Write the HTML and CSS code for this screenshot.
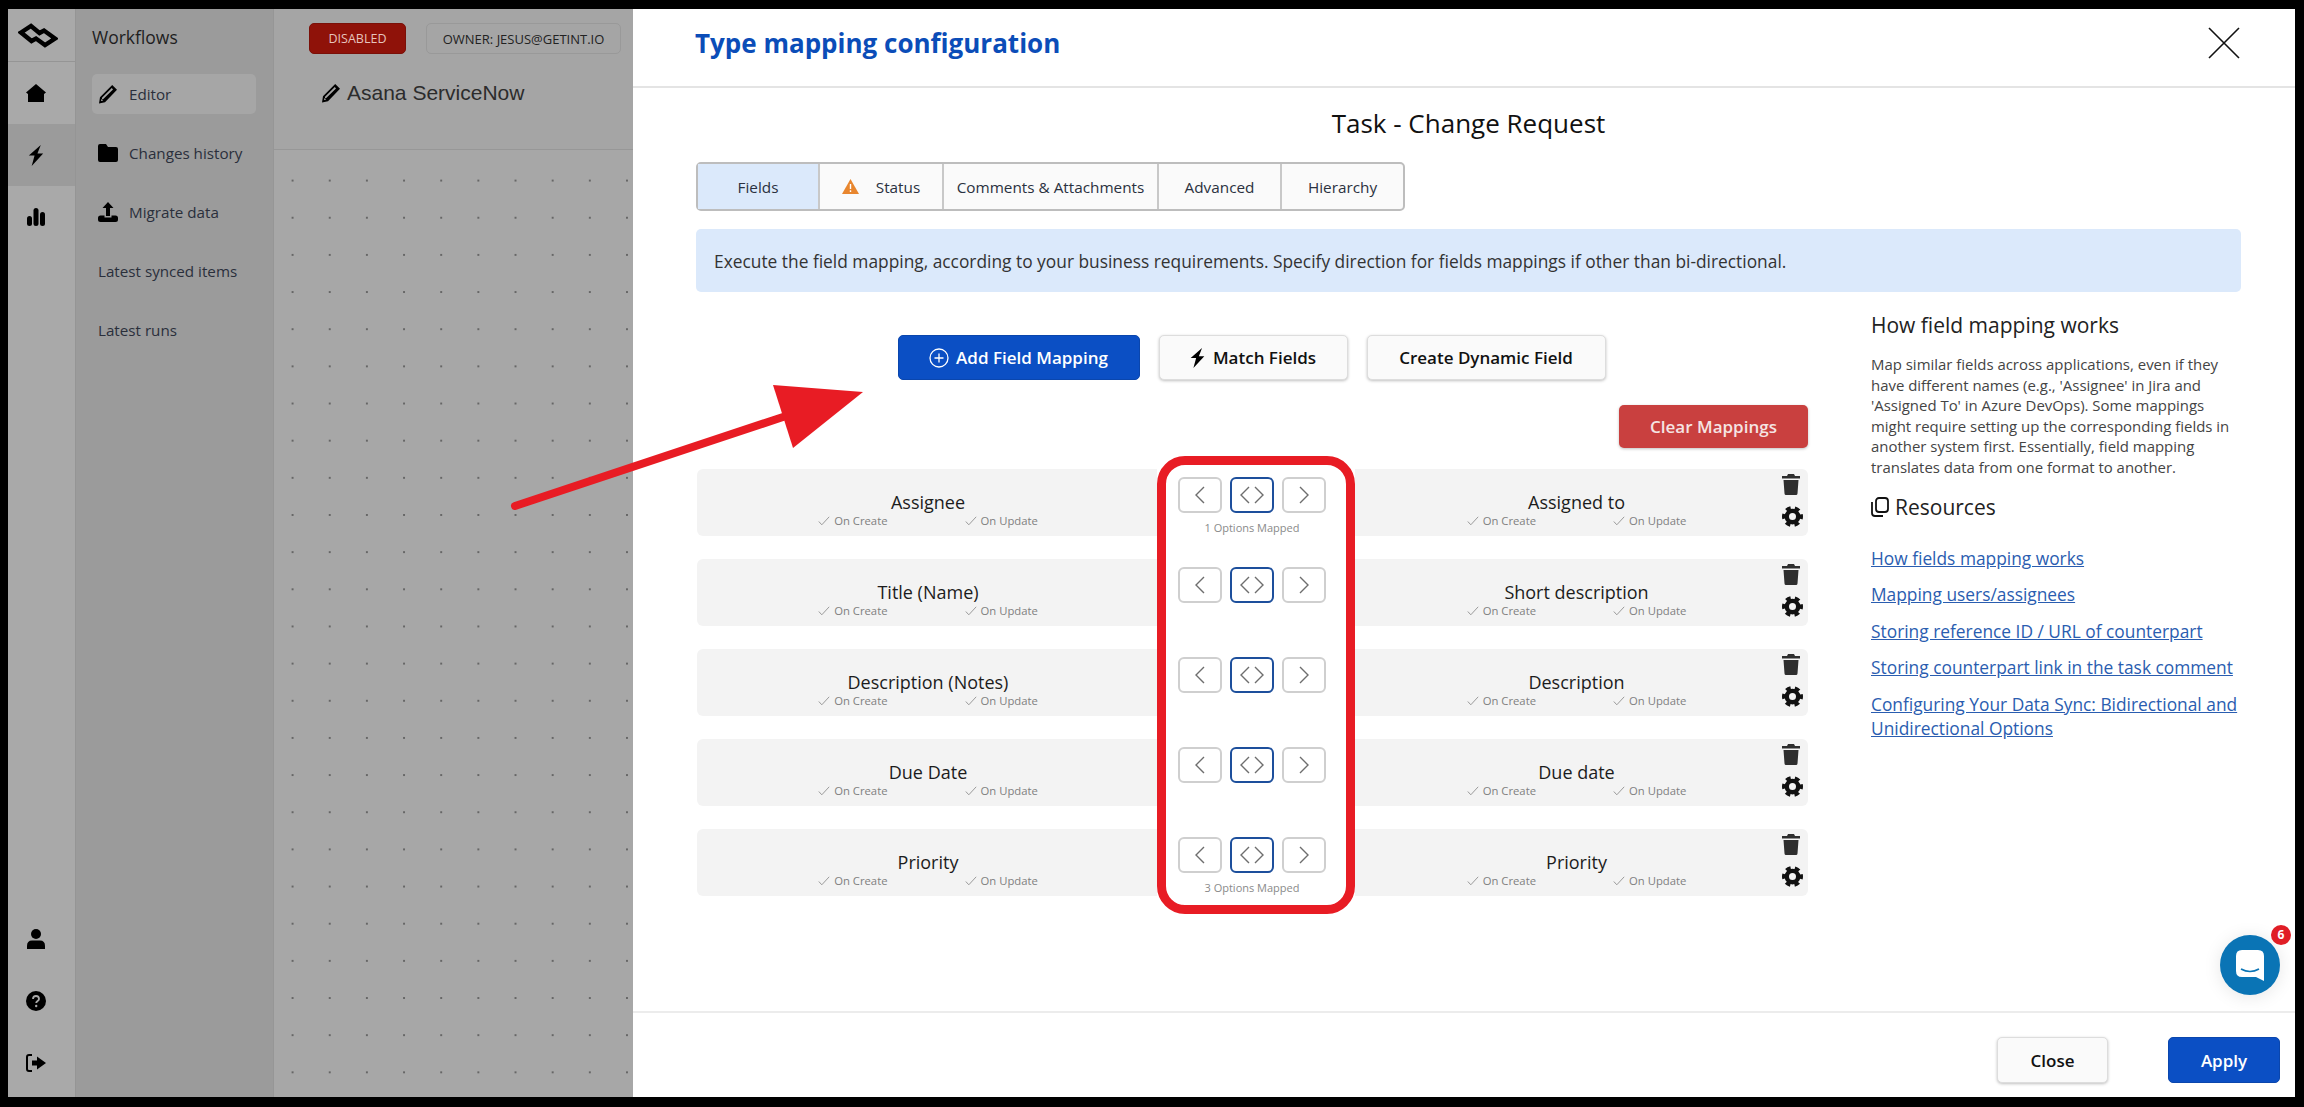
FILE: index.html
```html
<!DOCTYPE html>
<html lang="en">

<head>
    <meta charset="UTF-8">
    <title>Type mapping configuration</title>
    <link rel="stylesheet" href="styles.css">
</head>

<body>
    <svg class="defs" width="0" height="0">
        <symbol id="i-pencil" viewBox="0 0 20 20"><path d="M14.2 1 19 5.8 7 18.2 1 19.5 2 13.2Z M13.8 4 4 13.8 4 15.2 5 15.2 15 5.4Z M3.4 15 3 17.1 5.1 16.7Z" fill-rule="evenodd"/></symbol>
        <symbol id="i-bolt" viewBox="0 0 16 22"><path d="M13 0 .5 11H6.5L3.5 22 15.5 9H9.5Z"/></symbol>
        <symbol id="i-trash" viewBox="0 0 18 21"><path d="M6 0H12L13 2H18V4.5H0V2H5ZM1.5 6H16.5L15.5 19.5Q15.4 21 14 21H4Q2.6 21 2.5 19.5Z"/></symbol>
        <symbol id="i-gear" viewBox="0 0 24 24">
            <circle cx="12" cy="12" r="6.5" fill="none" stroke="currentColor" stroke-width="5"/>
            <circle cx="12" cy="12" r="10" fill="none" stroke="currentColor" stroke-width="4" stroke-dasharray="5.6 4.87" stroke-dashoffset="2.8"/>
        </symbol>
        <symbol id="i-check" viewBox="0 0 12 10"><path d="M.8 5.5 3.8 8.8 11.2.8" fill="none" stroke="currentColor" stroke-width="1"/></symbol>
        <symbol id="i-left" viewBox="0 0 10 18"><path d="M9 1 1 9 9 17" fill="none" stroke="currentColor" stroke-width="1.4"/></symbol>
        <symbol id="i-right" viewBox="0 0 10 18"><path d="M1 1 9 9 1 17" fill="none" stroke="currentColor" stroke-width="1.4"/></symbol>
        <symbol id="i-both" viewBox="0 0 24 18"><path d="M9 1 1 9 9 17M15 1 23 9 15 17" fill="none" stroke="currentColor" stroke-width="1.4"/></symbol>
    </svg>

    <div class="page">
        <!-- Icon rail -->
        <nav class="rail">
            <div class="rail-logo">
                <svg width="40" height="25" viewBox="0 0 40 25"><path d="M3 9.5 13 3 21.5 10 26 7.5 37 15.5 27 22 18 15.5 13.5 18Z" fill="none" stroke="#000" stroke-width="4.4"/></svg>
            </div>
            <div class="rail-item">
                <svg width="20" height="18" viewBox="0 0 20 18"><path d="M10 0 20 8.5 18 10V18H2V10L0 8.5Z"/></svg>
            </div>
            <div class="rail-item rail-active">
                <svg width="16" height="21"><use href="#i-bolt"/></svg>
            </div>
            <div class="rail-item">
                <svg width="18" height="18" viewBox="0 0 18 18"><rect x="0" y="8" width="5" height="10" rx="2.5"/><rect x="6.5" y="0" width="5" height="18" rx="2.5"/><rect x="13" y="4" width="5" height="14" rx="2.5"/></svg>
            </div>
            <div class="rail-spacer"></div>
            <div class="rail-item">
                <svg width="18" height="20" viewBox="0 0 18 20"><circle cx="9" cy="5" r="5"/><path d="M0 20V17Q0 11.5 5 11.5H13Q18 11.5 18 17V20Z"/></svg>
            </div>
            <div class="rail-item">
                <svg width="20" height="20" viewBox="0 0 20 20"><circle cx="10" cy="10" r="10"/><path d="M7 8Q7 5 10 5T13 8C13 10 10.2 10 10.2 12" fill="none" stroke="#a9a9a9" stroke-width="1.8"/><circle cx="10.2" cy="15" r="1.2" fill="#a9a9a9"/></svg>
            </div>
            <div class="rail-item rail-last">
                <svg width="20" height="18" viewBox="0 0 20 18"><path d="M6 1H3Q1 1 1 3V15Q1 17 3 17H6" fill="none" stroke="#000" stroke-width="2"/><path d="M6 6.5H11V2.5L20 9 11 15.5V11.5H6Z"/></svg>
            </div>
        </nav>

        <!-- Workflows menu -->
        <aside class="menu">
            <h2 class="menu-title">Workflows</h2>
            <a class="menu-item menu-active"><svg class="menu-icon" width="20" height="22"><use href="#i-pencil"/></svg>Editor</a>
            <a class="menu-item"><svg class="menu-icon" width="20" height="18" viewBox="0 0 20 18"><path d="M2 0H8L10 3H18Q20 3 20 5V16Q20 18 18 18H2Q0 18 0 16V2Q0 0 2 0Z"/></svg>Changes history</a>
            <a class="menu-item"><svg class="menu-icon" width="20" height="20" viewBox="0 0 20 20"><path d="M10 0 15.5 6H12V14H8V6H4.5Z"/><path d="M0 16Q0 13.5 2.5 13.5H6.5V15.5H13.5V13.5H17.5Q20 13.5 20 16V17.5Q20 20 17.5 20H2.5Q0 20 0 17.5Z"/></svg>Migrate data</a>
            <a class="menu-item">Latest synced items</a>
            <a class="menu-item">Latest runs</a>
        </aside>

        <!-- Canvas behind the dialog -->
        <main class="workflow">
            <header class="workflow-header">
                <div class="workflow-badges">
                    <span class="badge-disabled">DISABLED</span>
                    <span class="badge-owner">OWNER: JESUS@GETINT.IO</span>
                </div>
                <div class="workflow-name">
                    <svg width="20" height="24"><use href="#i-pencil"/></svg>
                    Asana ServiceNow
                </div>
            </header>
            <div class="workflow-canvas"></div>
        </main>

        <!-- Dialog -->
        <section class="dialog">
            <header class="dialog-header">
                <h1 class="dialog-title">Type mapping configuration</h1>
                <svg class="dialog-close" width="32" height="32" viewBox="0 0 32 32"><path d="M1 1 31 31M31 1 1 31" stroke="#111" stroke-width="1.6"/></svg>
            </header>

            <div class="dialog-body">
                <h2 class="task-title">Task - Change Request</h2>

                <div class="tabs">
                    <div class="tab tab-active">Fields</div>
                    <div class="tab">
                        <svg class="tab-warning" width="17" height="15" viewBox="0 0 17 15"><path d="M8.5 0 17 15H0Z" fill="#e8862e"/><path d="M8.5 5V10M8.5 11.2V13" stroke="#fff" stroke-width="1.4"/></svg>
                        Status
                    </div>
                    <div class="tab">Comments &amp; Attachments</div>
                    <div class="tab">Advanced</div>
                    <div class="tab">Hierarchy</div>
                </div>

                <div class="info-banner">Execute the field mapping, according to your business requirements. Specify direction for fields mappings if other than bi-directional.</div>

                <div class="content">
                    <div class="mapping">
                        <div class="actions">
                            <button class="btn btn-primary btn-add">
                                <svg width="20" height="20" viewBox="0 0 20 20"><circle cx="10" cy="10" r="9" fill="none" stroke="#fff" stroke-width="1.3"/><path d="M10 5.5V14.5M5.5 10H14.5" stroke="#fff" stroke-width="1.3"/></svg>
                                Add Field Mapping
                            </button>
                            <button class="btn btn-match"><svg width="15" height="20"><use href="#i-bolt"/></svg>Match Fields</button>
                            <button class="btn btn-dynamic">Create Dynamic Field</button>
                        </div>

                        <div class="clear-row">
                            <button class="btn btn-clear">Clear Mappings</button>
                        </div>

                        <div class="field-list">
                            <div class="field-row">
                                <div class="field-cell">
                                    <div class="field-name">Assignee</div>
                                    <div class="field-opts">
                                        <span class="opt"><svg width="12" height="10"><use href="#i-check"/></svg>On Create</span>
                                        <span class="opt"><svg width="12" height="10"><use href="#i-check"/></svg>On Update</span>
                                    </div>
                                </div>
                                <div class="direction">
                                    <div class="direction-btns">
                                        <span class="dir-btn"><svg width="10" height="18"><use href="#i-left"/></svg></span>
                                        <span class="dir-btn dir-active"><svg width="24" height="18"><use href="#i-both"/></svg></span>
                                        <span class="dir-btn"><svg width="10" height="18"><use href="#i-right"/></svg></span>
                                    </div>
                                    <div class="mapped-count">1 Options Mapped</div>
                                </div>
                                <div class="field-cell field-cell-right">
                                    <div class="field-text">
                                        <div class="field-name">Assigned to</div>
                                        <div class="field-opts">
                                            <span class="opt"><svg width="12" height="10"><use href="#i-check"/></svg>On Create</span>
                                            <span class="opt"><svg width="12" height="10"><use href="#i-check"/></svg>On Update</span>
                                        </div>
                                    </div>
                                    <div class="field-tools">
                                        <svg width="18" height="21"><use href="#i-trash"/></svg>
                                        <svg class="gear" width="21" height="21"><use href="#i-gear"/></svg>
                                    </div>
                                </div>
                            </div>

                            <div class="field-row">
                                <div class="field-cell">
                                    <div class="field-name">Title (Name)</div>
                                    <div class="field-opts">
                                        <span class="opt"><svg width="12" height="10"><use href="#i-check"/></svg>On Create</span>
                                        <span class="opt"><svg width="12" height="10"><use href="#i-check"/></svg>On Update</span>
                                    </div>
                                </div>
                                <div class="direction">
                                    <div class="direction-btns">
                                        <span class="dir-btn"><svg width="10" height="18"><use href="#i-left"/></svg></span>
                                        <span class="dir-btn dir-active"><svg width="24" height="18"><use href="#i-both"/></svg></span>
                                        <span class="dir-btn"><svg width="10" height="18"><use href="#i-right"/></svg></span>
                                    </div>
                                </div>
                                <div class="field-cell field-cell-right">
                                    <div class="field-text">
                                        <div class="field-name">Short description</div>
                                        <div class="field-opts">
                                            <span class="opt"><svg width="12" height="10"><use href="#i-check"/></svg>On Create</span>
                                            <span class="opt"><svg width="12" height="10"><use href="#i-check"/></svg>On Update</span>
                                        </div>
                                    </div>
                                    <div class="field-tools">
                                        <svg width="18" height="21"><use href="#i-trash"/></svg>
                                        <svg class="gear" width="21" height="21"><use href="#i-gear"/></svg>
                                    </div>
                                </div>
                            </div>

                            <div class="field-row">
                                <div class="field-cell">
                                    <div class="field-name">Description (Notes)</div>
                                    <div class="field-opts">
                                        <span class="opt"><svg width="12" height="10"><use href="#i-check"/></svg>On Create</span>
                                        <span class="opt"><svg width="12" height="10"><use href="#i-check"/></svg>On Update</span>
                                    </div>
                                </div>
                                <div class="direction">
                                    <div class="direction-btns">
                                        <span class="dir-btn"><svg width="10" height="18"><use href="#i-left"/></svg></span>
                                        <span class="dir-btn dir-active"><svg width="24" height="18"><use href="#i-both"/></svg></span>
                                        <span class="dir-btn"><svg width="10" height="18"><use href="#i-right"/></svg></span>
                                    </div>
                                </div>
                                <div class="field-cell field-cell-right">
                                    <div class="field-text">
                                        <div class="field-name">Description</div>
                                        <div class="field-opts">
                                            <span class="opt"><svg width="12" height="10"><use href="#i-check"/></svg>On Create</span>
                                            <span class="opt"><svg width="12" height="10"><use href="#i-check"/></svg>On Update</span>
                                        </div>
                                    </div>
                                    <div class="field-tools">
                                        <svg width="18" height="21"><use href="#i-trash"/></svg>
                                        <svg class="gear" width="21" height="21"><use href="#i-gear"/></svg>
                                    </div>
                                </div>
                            </div>

                            <div class="field-row">
                                <div class="field-cell">
                                    <div class="field-name">Due Date</div>
                                    <div class="field-opts">
                                        <span class="opt"><svg width="12" height="10"><use href="#i-check"/></svg>On Create</span>
                                        <span class="opt"><svg width="12" height="10"><use href="#i-check"/></svg>On Update</span>
                                    </div>
                                </div>
                                <div class="direction">
                                    <div class="direction-btns">
                                        <span class="dir-btn"><svg width="10" height="18"><use href="#i-left"/></svg></span>
                                        <span class="dir-btn dir-active"><svg width="24" height="18"><use href="#i-both"/></svg></span>
                                        <span class="dir-btn"><svg width="10" height="18"><use href="#i-right"/></svg></span>
                                    </div>
                                </div>
                                <div class="field-cell field-cell-right">
                                    <div class="field-text">
                                        <div class="field-name">Due date</div>
                                        <div class="field-opts">
                                            <span class="opt"><svg width="12" height="10"><use href="#i-check"/></svg>On Create</span>
                                            <span class="opt"><svg width="12" height="10"><use href="#i-check"/></svg>On Update</span>
                                        </div>
                                    </div>
                                    <div class="field-tools">
                                        <svg width="18" height="21"><use href="#i-trash"/></svg>
                                        <svg class="gear" width="21" height="21"><use href="#i-gear"/></svg>
                                    </div>
                                </div>
                            </div>

                            <div class="field-row">
                                <div class="field-cell">
                                    <div class="field-name">Priority</div>
                                    <div class="field-opts">
                                        <span class="opt"><svg width="12" height="10"><use href="#i-check"/></svg>On Create</span>
                                        <span class="opt"><svg width="12" height="10"><use href="#i-check"/></svg>On Update</span>
                                    </div>
                                </div>
                                <div class="direction">
                                    <div class="direction-btns">
                                        <span class="dir-btn"><svg width="10" height="18"><use href="#i-left"/></svg></span>
                                        <span class="dir-btn dir-active"><svg width="24" height="18"><use href="#i-both"/></svg></span>
                                        <span class="dir-btn"><svg width="10" height="18"><use href="#i-right"/></svg></span>
                                    </div>
                                    <div class="mapped-count">3 Options Mapped</div>
                                </div>
                                <div class="field-cell field-cell-right">
                                    <div class="field-text">
                                        <div class="field-name">Priority</div>
                                        <div class="field-opts">
                                            <span class="opt"><svg width="12" height="10"><use href="#i-check"/></svg>On Create</span>
                                            <span class="opt"><svg width="12" height="10"><use href="#i-check"/></svg>On Update</span>
                                        </div>
                                    </div>
                                    <div class="field-tools">
                                        <svg width="18" height="21"><use href="#i-trash"/></svg>
                                        <svg class="gear" width="21" height="21"><use href="#i-gear"/></svg>
                                    </div>
                                </div>
                            </div>

                            <!-- Red annotation round the direction buttons -->
                            <div class="highlight"></div>
                        </div>
                    </div>

                    <aside class="help">
                        <h3 class="help-title">How field mapping works</h3>
                        <p class="help-text">Map similar fields across applications, even if they have different names (e.g., 'Assignee' in Jira and 'Assigned To' in Azure DevOps). Some mappings might require setting up the corresponding fields in another system first. Essentially, field mapping translates data from one format to another.</p>
                        <h3 class="help-title help-resources">
                            <svg width="18" height="20" viewBox="0 0 18 20"><path d="M1 5V16Q1 19 4 19H12" fill="none" stroke="#111" stroke-width="1.8"/><rect x="5" y="1" width="12" height="14" rx="3" fill="none" stroke="#111" stroke-width="1.8"/></svg>
                            Resources
                        </h3>
                        <a class="help-link">How fields mapping works</a>
                        <a class="help-link">Mapping users/assignees</a>
                        <a class="help-link">Storing reference ID / URL of counterpart</a>
                        <a class="help-link">Storing counterpart link in the task comment</a>
                        <a class="help-link">Configuring Your Data Sync: Bidirectional and Unidirectional Options</a>
                    </aside>
                </div>
            </div>

            <footer class="dialog-footer">
                <button class="btn btn-close">Close</button>
                <button class="btn btn-primary btn-apply">Apply</button>
            </footer>

            <!-- Chat launcher -->
            <div class="chat">
                <svg width="28" height="31" viewBox="0 0 28 31"><path d="M6 0H22Q28 0 28 6V31L20 27H6Q0 27 0 21V6Q0 0 6 0Z" fill="#fff"/><path d="M5 19Q14 24 23 19" fill="none" stroke="#0a74b5" stroke-width="1.6"/></svg>
                <span class="chat-badge">6</span>
            </div>
        </section>

        <!-- Red annotation arrow -->
        <svg class="arrow" width="370" height="140" viewBox="0 0 370 140">
            <path d="M10 126 278 37" stroke="#e81c24" stroke-width="8" stroke-linecap="round"/>
            <path d="M268 5 358 12 288 68Z" fill="#e81c24"/>
        </svg>
    </div>
</body>

</html>
```

FILE: styles.css
```css
* {
    box-sizing: border-box;
}

html,
body {
    height: 100%;
    margin: 0;
}

body {
    background: #000;
    font-family: "Open Sans", Arial, sans-serif;
    color: #222;
    overflow: hidden;
}

.defs {
    position: absolute;
}

.page {
    position: relative;
    display: flex;
    height: 1107px;
    padding: 9px 9px 10px 8px;
}

/* Icon rail */
.rail {
    width: 67px;
    flex: none;
    display: flex;
    flex-direction: column;
    background: #a9a9a9;
}

.rail-logo {
    height: 53px;
    flex: none;
    display: flex;
    align-items: center;
    justify-content: center;
    padding-right: 8px;
    border-bottom: 1px solid #959595;
}

.rail-item {
    height: 62px;
    flex: none;
    display: flex;
    align-items: center;
    justify-content: center;
    padding-right: 12px;
}

.rail-active {
    background: #9b9b9b;
}

.rail-spacer {
    flex: 1;
}

.rail-last {
    margin-bottom: 3px;
}

/* Workflows menu */
.menu {
    width: 198px;
    flex: none;
    padding: 0 17px 0 16px;
    background: #9b9b9b;
    border-left: 1px solid #959595;
}

.menu-title {
    margin: 0;
    height: 65px;
    padding-top: 14px;
    font-size: 17.5px;
    font-weight: 400;
    line-height: 28px;
    color: #1e1e1e;
}

.menu-item {
    display: flex;
    align-items: center;
    height: 40px;
    margin-bottom: 19px;
    padding-left: 6px;
    font-size: 15.2px;
    color: #2a2f3b;
    border-radius: 5px;
}

.menu-active {
    background: #a6a6a6;
}

.menu-icon {
    margin-right: 11px;
}

/* Canvas behind the dialog */
.workflow {
    width: 360px;
    flex: none;
    display: flex;
    flex-direction: column;
    background: #a7a7a7;
    border-left: 1px solid #969696;
}

.workflow-header {
    height: 141px;
    flex: none;
    padding: 14px 12px 0 35px;
    background: #a5a5a5;
    border-bottom: 1px solid #979797;
}

.workflow-badges {
    display: flex;
    gap: 20px;
}

.badge-disabled {
    width: 97px;
    height: 31px;
    display: flex;
    align-items: center;
    justify-content: center;
    font-size: 12.5px;
    color: #e6c4be;
    background: #8f1209;
    border: 1px solid #7a1008;
    border-radius: 5px;
}

.badge-owner {
    width: 195px;
    height: 31px;
    display: flex;
    align-items: center;
    justify-content: center;
    font-size: 13px;
    color: #222;
    border: 1px solid #999;
    border-radius: 5px;
}

.workflow-name {
    display: flex;
    align-items: center;
    gap: 6px;
    margin: 24px 0 0 12px;
    font-family: "Liberation Sans", Arial, sans-serif;
    font-size: 21px;
    line-height: 30px;
    color: #2c2c2c;
}

.workflow-canvas {
    flex: 1;
    background-image: radial-gradient(circle, #666 0.8px, transparent 1.2px);
    background-size: 37.17px 37.17px;
    background-position: 0 12px;
}

/* Dialog */
.dialog {
    position: relative;
    flex: 1;
    display: flex;
    flex-direction: column;
    background: #fff;
}

.dialog-header {
    height: 79px;
    flex: none;
    display: flex;
    align-items: center;
    justify-content: space-between;
    padding: 0 55px 9px 62px;
    border-bottom: 2px solid #e4e4e4;
}

.dialog-title {
    margin: 0;
    font-size: 26px;
    font-weight: 700;
    color: #0b4db8;
}

.dialog-body {
    flex: 1;
    padding: 0 54px 0 63px;
}

.task-title {
    margin: 0;
    height: 74px;
    padding-top: 17px;
    font-size: 26px;
    font-weight: 400;
    line-height: 36px;
    text-align: center;
    color: #111;
}

/* Tabs */
.tabs {
    display: grid;
    grid-template-columns: 122px 124px 215px 123px 1fr;
    width: 709px;
    height: 49px;
    background: #fafafa;
    border: 2px solid #bdbdbd;
    border-radius: 5px;
}

.tab {
    display: flex;
    align-items: center;
    justify-content: center;
    font-size: 15.3px;
    font-weight: 500;
    color: #2a3140;
    border-right: 2px solid #c8c8c8;
}

.tab:last-child {
    border-right: none;
}

.tab-active {
    background: #dbe9fb;
}

.tab-warning {
    margin-right: 17px;
}

.info-banner {
    height: 63px;
    margin-top: 18px;
    padding: 0 18px;
    display: flex;
    align-items: center;
    font-size: 17.35px;
    color: #333;
    background: #dbe9fb;
    border-radius: 5px;
}

/* Mapping area */
.content {
    display: flex;
}

.mapping {
    width: 1111px;
    flex: none;
    margin-left: 1px;
}

.actions {
    display: flex;
    justify-content: center;
    gap: 19px;
    margin: 43px 0 0 -2px;
}

.btn {
    height: 45px;
    display: inline-flex;
    align-items: center;
    justify-content: center;
    font-family: inherit;
    font-size: 17px;
    font-weight: 600;
    color: #111;
    background: #fafafa;
    border: 1px solid #ddd;
    border-radius: 5px;
    box-shadow: 0 1px 3px rgba(0, 0, 0, 0.25);
    cursor: pointer;
}

.btn-primary {
    color: #fff;
    background: #0b4fc4;
    border-color: #0a46ad;
    box-shadow: none;
}

.btn-add {
    width: 242px;
    gap: 7px;
}

.btn-match {
    width: 189px;
    gap: 8px;
}

.btn-dynamic {
    width: 239px;
}

.clear-row {
    display: flex;
    justify-content: flex-end;
    margin-top: 25px;
}

.btn-clear {
    width: 189px;
    height: 43px;
    color: #f5e4e3;
    background: #c9403f;
    border: none;
}

.field-list {
    position: relative;
    display: flex;
    flex-direction: column;
    gap: 23px;
    margin-top: 21px;
}

.field-row {
    display: grid;
    grid-template-columns: 460px 198px 1fr;
    height: 67px;
}

.field-cell {
    padding-top: 21px;
    padding-left: 2px;
    text-align: center;
    background: #f3f3f3;
    border-radius: 6px 0 0 6px;
}

.field-cell-right {
    display: flex;
    padding-top: 0;
    padding-left: 0;
    border-radius: 0 6px 6px 0;
}

.field-text {
    flex: 1;
    margin-right: -16px;
    padding-top: 21px;
}

.field-tools {
    width: 26px;
    flex: none;
    display: flex;
    flex-direction: column;
    align-items: flex-start;
    padding-top: 5px;
    color: #111;
}

.field-tools svg:first-child {
    fill: #2e2e2e;
}

.gear {
    margin-top: 11px;
}

.field-name {
    font-size: 18px;
    line-height: 25px;
    color: #1c1c1c;
}

.field-opts {
    display: flex;
    justify-content: center;
    gap: 77px;
    margin-top: -1px;
}

.opt {
    display: flex;
    align-items: center;
    gap: 4px;
    font-size: 11.3px;
    line-height: 14px;
    color: #808080;
}

.opt svg {
    color: #9a9a9a;
}

/* Direction buttons */
.direction {
    padding: 8px 8px 0 0;
    display: flex;
    flex-direction: column;
    align-items: center;
}

.direction-btns {
    display: flex;
    gap: 8px;
}

.dir-btn {
    width: 44px;
    height: 36px;
    display: flex;
    align-items: center;
    justify-content: center;
    color: #6e6e6e;
    border: 2px solid #cfcfcf;
    border-radius: 6px;
}

.dir-active {
    border-color: #1d4f9c;
}

.mapped-count {
    margin-top: 8px;
    font-size: 11px;
    line-height: 14px;
    color: #8a8a8a;
}

.highlight {
    position: absolute;
    left: 460px;
    top: -13px;
    width: 198px;
    height: 458px;
    border: 9px solid #e81c24;
    border-radius: 28px;
    pointer-events: none;
}

/* Help column */
.help {
    width: 370px;
    flex: none;
    margin-left: 63px;
    padding-top: 18px;
}

.help-title {
    margin: 0;
    font-size: 21px;
    font-weight: 400;
    line-height: 30px;
    color: #222;
}

.help-text {
    margin: 14px 0 0;
    font-size: 14.95px;
    line-height: 20.6px;
    color: #444;
}

.help-resources {
    display: flex;
    align-items: center;
    gap: 6px;
    margin: 14px 0 24px;
}

.help-link {
    display: block;
    margin-bottom: 12px;
    font-size: 17.35px;
    line-height: 24.5px;
    color: #2a5db0;
    text-decoration: underline;
}

/* Footer */
.dialog-footer {
    height: 86px;
    flex: none;
    display: flex;
    justify-content: flex-end;
    gap: 60px;
    padding: 24px 15px 0 0;
    border-top: 2px solid #ececec;
}

.btn-close {
    width: 111px;
    height: 46px;
}

.btn-apply {
    width: 112px;
    height: 46px;
}

/* Chat launcher */
.chat {
    position: absolute;
    right: 15px;
    bottom: 102px;
    width: 60px;
    height: 60px;
    display: flex;
    align-items: center;
    justify-content: center;
    background: #0a74b5;
    border-radius: 50%;
    box-shadow: 0 2px 18px rgba(0, 0, 0, 0.1);
}

.chat-badge {
    position: absolute;
    top: -10px;
    right: -11px;
    width: 20px;
    height: 20px;
    font-size: 12px;
    font-weight: 700;
    line-height: 20px;
    text-align: center;
    color: #fff;
    background: #e01e26;
    border-radius: 50%;
}

/* Annotation arrow */
.arrow {
    position: absolute;
    left: 505px;
    top: 380px;
}
```
